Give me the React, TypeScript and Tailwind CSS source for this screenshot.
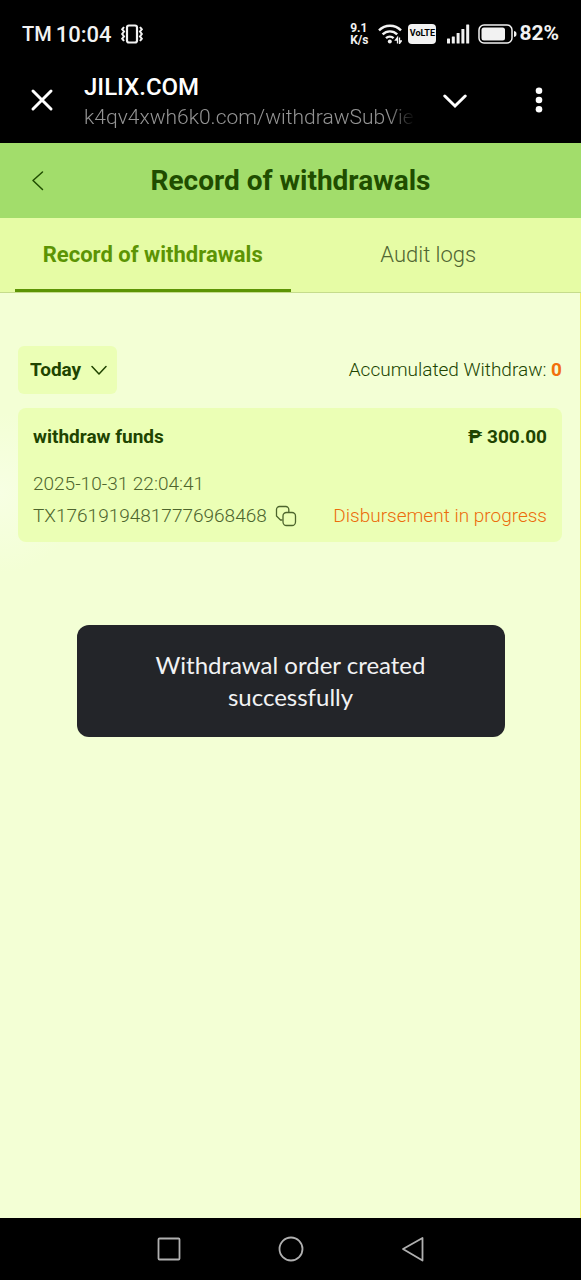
import React from 'react';

const VibrateIcon: React.FC = () => (
    <svg className="w-6 h-5" viewBox="0 0 24 20" fill="none" stroke="currentColor" strokeWidth="2.200">
        <rect x="7" y="1.500" width="10" height="17" rx="2" />
        <path d="M4 3l-1.800 2.300L4 7.600 2.200 10 4 12.400l-1.800 2.300L4 17M20 3l1.800 2.300L20 7.600l1.800 2.400-1.800 2.400 1.800 2.300L20 17" strokeWidth="2" />
    </svg>
);

const WifiIcon: React.FC = () => (
    <svg className="w-6 h-5" viewBox="0 0 24 20" fill="none" stroke="currentColor" strokeWidth="2.400">
        <path d="M1 6.300a15.500 15.500 0 0 1 22 0M4.600 10.400a10.400 10.400 0 0 1 14.600 0M8 14.200a5.600 5.600 0 0 1 7.600 0" />
        <circle cx="11.800" cy="17.600" r="2" fill="currentColor" stroke="none" />
        <path d="M19.500 19.500v-6l-2 2.700h2M21.500 13.500v6l2-2.700h-2" strokeWidth="1.300" />
    </svg>
);

const SignalIcon: React.FC = () => (
    <svg className="w-6 h-5" viewBox="0 0 24 20" fill="currentColor">
        <rect x="1" y="14.500" width="3" height="5" rx=".5" />
        <rect x="5.800" y="12.500" width="3" height="7" rx=".5" />
        <rect x="10.600" y="9" width="3" height="10.500" rx=".5" />
        <rect x="15.400" y="5" width="3" height="14.500" rx=".5" />
        <rect x="20.200" y=".5" width="3" height="19" rx=".5" />
    </svg>
);

const BatteryIcon: React.FC = () => (
    <svg className="w-[39px] h-5" viewBox="0 0 39 20" fill="none">
        <rect x="1" y="1" width="33" height="18" rx="5" stroke="currentColor" strokeWidth="1.500" />
        <rect x="3.500" y="3.500" width="23.500" height="13" rx="2.500" fill="currentColor" />
        <path d="M36 7c2 .3 2.500 1.500 2.500 3s-.5 2.700-2.500 3z" fill="currentColor" />
    </svg>
);

const CloseIcon: React.FC = () => (
    <svg className="w-6 h-6" viewBox="0 0 24 24" fill="none" stroke="currentColor" strokeWidth="3" strokeLinecap="round">
        <path d="M3 3l18 18M21 3L3 21" />
    </svg>
);

const ExpandIcon: React.FC = () => (
    <svg className="w-6 h-6" viewBox="0 0 24 24" fill="none" stroke="currentColor" strokeWidth="3" strokeLinecap="round">
        <path d="M1.800 8L12 18 22.200 8" />
    </svg>
);

const MoreIcon: React.FC = () => (
    <svg className="w-6 h-7" viewBox="0 0 24 28" fill="currentColor">
        <circle cx="12" cy="4.700" r="3.300" />
        <circle cx="12" cy="14" r="3.300" />
        <circle cx="12" cy="23.300" r="3.300" />
    </svg>
);

const BackIcon: React.FC = () => (
    <svg className="w-6 h-6" viewBox="0 0 24 24" fill="none" stroke="currentColor" strokeWidth="1.500" strokeLinecap="round" strokeLinejoin="round">
        <path d="M16.500 3L7 11.500l9.500 9" />
    </svg>
);

const ChevronDownIcon: React.FC = () => (
    <svg className="w-4 h-4" viewBox="0 0 16 16" fill="none" stroke="currentColor" strokeWidth="1.500" strokeLinecap="round" strokeLinejoin="round">
        <path d="M1 4.500L8 12l7-7.500" />
    </svg>
);

const CopyIcon: React.FC = () => (
    <svg className="w-[22px] h-[22px]" viewBox="0 0 22 22" fill="none" stroke="currentColor" strokeWidth="1.300">
        <path d="M7.500 15H5.500L1.500 11V4.500a3 3 0 0 1 3-3h6.300a3 3 0 0 1 3 3V7" strokeLinejoin="round" />
        <rect x="8" y="7.500" width="12.500" height="13" rx="3.500" />
    </svg>
);

const tabs = [
    { label: 'Record of withdrawals', active: true },
    { label: 'Audit logs', active: false },
];

const StatusBar: React.FC = () => (
    <div className="flex items-center h-[68px] px-[22px] text-[#f2f2f2]">
        <span className="text-xl font-medium">TM</span>
        <span className="ms-1 text-[22px] font-medium">10:04</span>
        <span className="ms-2"><VibrateIcon /></span>
        <div className="flex items-center ms-auto">
            <div className="flex flex-col text-xs leading-3 font-bold">
                <span>9.1</span>
                <span>K/s</span>
            </div>
            <span className="ms-2.5"><WifiIcon /></span>
            <span className="flex items-center justify-center w-7 h-5 ms-1.5 rounded bg-[#f2f2f2] text-black text-[9px] font-bold">VoLTE</span>
            <span className="ms-2.5"><SignalIcon /></span>
            <span className="ms-2"><BatteryIcon /></span>
            <span className="ms-0.5 text-[21px] font-bold">82%</span>
        </div>
    </div>
);

const BrowserBar: React.FC = () => (
    <header className="flex items-start h-[75px] px-[30px] text-white">
        <button aria-label="Close" className="mt-5"><CloseIcon /></button>
        <div className="flex-1 min-w-0 ms-[30px] me-7 mt-1">
            <div className="text-2xl leading-[30px] font-medium">JILIX.COM</div>
            <div className="overflow-hidden whitespace-nowrap text-[21px] leading-[30px] font-light text-[#949494] mask-r-from-92%">k4qv4xwh6k0.com/withdrawSubVie</div>
        </div>
        <button aria-label="Expand" className="mt-5"><ExpandIcon /></button>
        <button aria-label="More" className="ms-15 mt-[18px]"><MoreIcon /></button>
    </header>
);

const App: React.FC = () => (
    <div className="flex flex-col min-h-screen bg-black font-['Roboto',sans-serif]">
        <StatusBar />
        <BrowserBar />

        <main className="relative flex flex-col flex-1 bg-[#f3ffd5]">
            <div className="grid grid-cols-[1fr_auto_1fr] items-center h-[75px] px-[26px] bg-[#a2dd6b] text-[#204d00]">
                <button aria-label="Back" className="justify-self-start"><BackIcon /></button>
                <h1 className="text-[28px] font-bold">Record of withdrawals</h1>
            </div>

            <nav className="grid grid-cols-2 h-[75px] px-[15px] bg-[#e6fca5] border-b border-[#c5dc8c]">
                {tabs.map(tab => (
                    <button
                        key={tab.label}
                        className={`pt-0.5 text-[22px] border-b-3 ${
                            tab.active ? 'font-bold text-[#5c9404] border-[#5c9404]' : 'font-light text-[#506632] border-transparent'
                        }`}
                    >
                        {tab.label}
                    </button>
                ))}
            </nav>

            <section className="flex-1 px-[18px] pt-[53px] border-r border-[#f4f070] bg-[radial-gradient(circle_at_0_200px,#f7ffe3,#f3ffd5_80px)]">
                <div className="flex items-center justify-between">
                    <div className="relative flex items-center rounded-md bg-[#ebffb5] text-[#204400]">
                        <select aria-label="Period" className="appearance-none w-[99px] h-12 ps-3 bg-transparent text-[19px] font-bold">
                            <option>Today</option>
                        </select>
                        <span className="absolute right-2.5 pointer-events-none"><ChevronDownIcon /></span>
                    </div>
                    <p className="text-[19px] font-light text-[#204400]">
                        Accumulated Withdraw: <b className="font-bold text-[#f2700c]">0</b>
                    </p>
                </div>

                <article className="mt-3.5 px-[15px] pt-3.5 pb-2.5 rounded-lg bg-[#ebffb5] text-[19px] font-light text-[#4d652d]">
                    <div className="flex justify-between leading-[30px] font-bold text-[#204400]">
                        <h2>withdraw funds</h2>
                        <span>₱ 300.00</span>
                    </div>
                    <div className="mt-4 leading-8">2025-10-31 22:04:41</div>
                    <div className="flex items-center leading-8">
                        <span>TX17619194817776968468</span>
                        <button aria-label="Copy" className="ms-2"><CopyIcon /></button>
                        <span className="ms-auto text-[#ec6c0c]">Disbursement in progress</span>
                    </div>
                </article>
            </section>

            <div className="absolute inset-0 flex items-center justify-center pointer-events-none">
                <div role="status" className="w-[428px] px-16 py-6 rounded-xl bg-[#232529] text-center font-['Lato',sans-serif] text-2xl leading-8 text-[#f1f2f3]">
                    Withdrawal order created successfully
                </div>
            </div>
        </main>

        <nav className="flex items-center justify-center gap-[94px] h-[62px] text-[#b0b0b0]">
            <button aria-label="Recent apps">
                <svg className="w-7 h-7" viewBox="0 0 28 28" fill="none" stroke="currentColor" strokeWidth="1.800">
                    <rect x="3.500" y="3.500" width="21" height="21" rx="1" />
                </svg>
            </button>
            <button aria-label="Home">
                <svg className="w-7 h-7" viewBox="0 0 28 28" fill="none" stroke="currentColor" strokeWidth="1.800">
                    <circle cx="14" cy="14" r="11.500" />
                </svg>
            </button>
            <button aria-label="Back">
                <svg className="w-7 h-7" viewBox="0 0 28 28" fill="none" stroke="currentColor" strokeWidth="1.800" strokeLinejoin="round">
                    <path d="M23.500 3v22.500L4 14z" />
                </svg>
            </button>
        </nav>
    </div>
);

export default App;
